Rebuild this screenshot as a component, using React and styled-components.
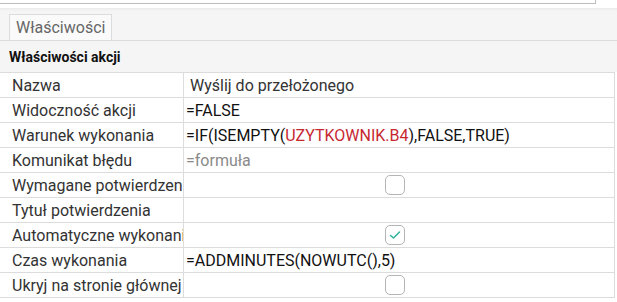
import React from "react";
import styled, { createGlobalStyle } from "styled-components";

const GlobalStyle = createGlobalStyle`
  body {
    margin: 0;
    background: #fff;
    font-family: Roboto, "Liberation Sans", sans-serif;
  }
`;

const TopFrame = styled.div`
  width: 596px;
  height: 4px;
  box-sizing: border-box;
  border-right: 1px solid #bdbdbd;
  border-bottom: 1px solid #bdbdbd;
`;

const Panel = styled.div`
  margin-top: 4px;
  background: #f5f5f5;
  box-shadow: inset 0 3px 3px -2px rgba(0, 0, 0, 0.06);
`;

const TabBar = styled.div`
  display: flex;
  align-items: flex-end;
  height: 33px;
  padding-left: 9px;
  box-sizing: border-box;
  border-bottom: 1px solid #dcdcdc;
`;

const Tab = styled.div`
  height: 26px;
  padding: 0 6px;
  box-sizing: border-box;
  display: flex;
  align-items: center;
  background: #fafafa;
  border: 1px solid #dcdcdc;
  border-bottom: none;
  color: #666;
  font-size: 16px;
`;

const SectionHeader = styled.div`
  width: 615px;
  height: 31px;
  display: flex;
  align-items: center;
  padding-left: 9px;
  box-sizing: border-box;
  background: #f5f5f5;
  border-top-right-radius: 4px;
  font-weight: 700;
  font-size: 14px;
  color: #111;
`;

const Table = styled.div`
  width: 615px;
  box-sizing: border-box;
  border: 1px solid #dcdcdc;
  border-bottom: none;
  border-left: none;
  background: #fff;
`;

const Row = styled.div`
  display: grid;
  grid-template-columns: 184px 1fr;
  height: 25px;
  box-sizing: border-box;
  border-bottom: 1px solid #dcdcdc;
`;

const Label = styled.div`
  border-right: 1px solid #dcdcdc;
  padding-left: 12px;
  display: flex;
  align-items: center;
  overflow: hidden;
  white-space: nowrap;
  font-size: 16px;
  color: #333;
`;

const Value = styled.div`
  display: flex;
  align-items: center;
  padding-left: ${(p) => (p.$inset ? "6px" : "2px")};
  font-size: 16px;
  color: ${(p) => (p.$muted ? "#8a8a8a" : p.$plain ? "#333" : "#111")};
  white-space: nowrap;
  overflow: hidden;
`;

const Ref = styled.span`
  color: #c62832;
`;

const Check = styled.span`
  width: 20px;
  height: 20px;
  box-sizing: border-box;
  margin-left: 199px;
  border: 1px solid #b5b5b5;
  border-radius: 5px;
  background: #fff;
  display: flex;
  align-items: center;
  justify-content: center;
`;

function Checkbox({ checked }) {
  return (
    <Check>
      {checked && (
        <svg width="14" height="14" viewBox="0 0 14 14">
          <path
            d="M2.5 7.5 L5.5 10 L11.5 4"
            fill="none"
            stroke="#2bb39a"
            strokeWidth="1.5"
            strokeLinecap="round"
            strokeLinejoin="round"
          />
        </svg>
      )}
    </Check>
  );
}

export default function App() {
  return (
    <>
      <GlobalStyle />
      <TopFrame />
      <Panel>
        <TabBar>
          <Tab>Właściwości</Tab>
        </TabBar>
        <SectionHeader>Właściwości akcji</SectionHeader>
      </Panel>
      <Table>
        <Row>
          <Label>Nazwa</Label>
          <Value $inset $plain>Wyślij do przełożonego</Value>
        </Row>
        <Row>
          <Label>Widoczność akcji</Label>
          <Value>=FALSE</Value>
        </Row>
        <Row>
          <Label>Warunek wykonania</Label>
          <Value>
            =IF(ISEMPTY(<Ref>UZYTKOWNIK.B4</Ref>),FALSE,TRUE)
          </Value>
        </Row>
        <Row>
          <Label>Komunikat błędu</Label>
          <Value $muted>=formuła</Value>
        </Row>
        <Row>
          <Label>Wymagane potwierdzenie</Label>
          <Value>
            <Checkbox />
          </Value>
        </Row>
        <Row>
          <Label>Tytuł potwierdzenia</Label>
          <Value />
        </Row>
        <Row>
          <Label>Automatyczne wykonanie</Label>
          <Value>
            <Checkbox checked />
          </Value>
        </Row>
        <Row>
          <Label>Czas wykonania</Label>
          <Value>=ADDMINUTES(NOWUTC(),5)</Value>
        </Row>
        <Row>
          <Label>Ukryj na stronie głównej</Label>
          <Value>
            <Checkbox />
          </Value>
        </Row>
      </Table>
    </>
  );
}
